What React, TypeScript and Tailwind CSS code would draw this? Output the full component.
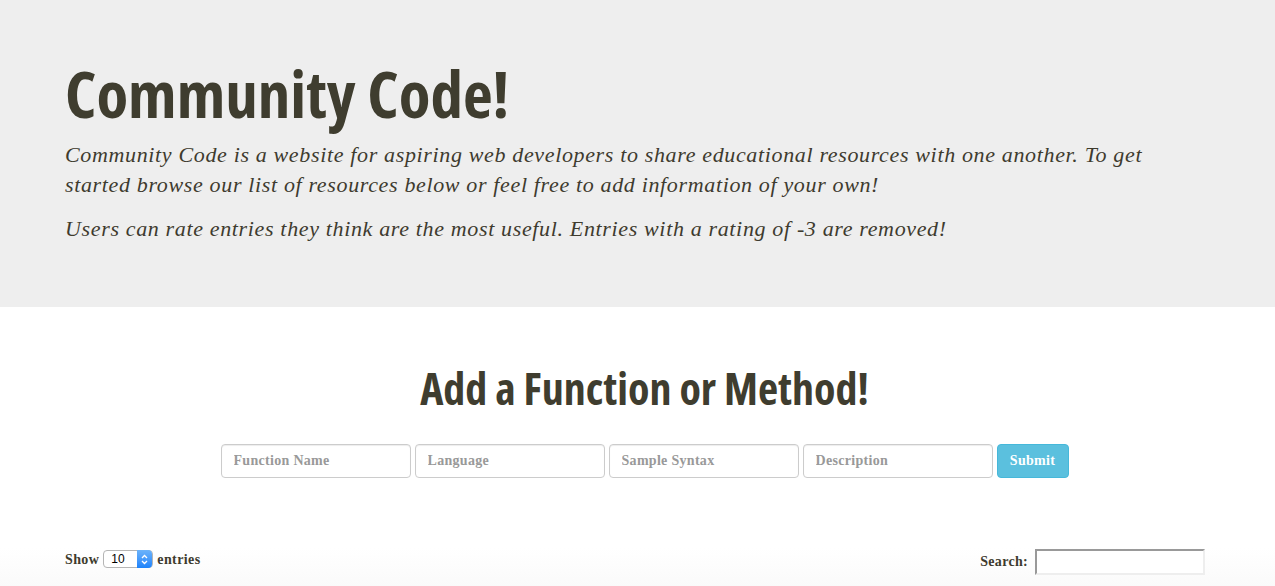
import React from "react";

const fields = ["Function Name", "Language", "Sample Syntax", "Description"];

const condensed = {
  fontFamily: '"Open Sans", "DejaVu Sans Condensed", sans-serif',
  fontStretch: "75%",
};

export default function App() {
  return (
    <div className="min-h-[586px] bg-white font-['Liberation_Serif',serif] text-[#3e3b2e]">
      <header className="bg-[#eeeeee] px-[65px] pt-[58px] pb-[63px]">
        <h1
          className="text-[65px] font-bold leading-[1.1] text-[#3f3d2f]"
          style={condensed}
        >
          Community Code!
        </h1>
        <p className="mt-[10px] max-w-[1142px] text-[22px] italic leading-[30px] tracking-[0.65px]">
          Community Code is a website for aspiring web developers to share educational resources with one another. To get
          started browse our list of resources below or feel free to add information of your own!
        </p>
        <p className="mt-[14px] text-[22px] italic leading-[30px] tracking-[0.65px]">
          Users can rate entries they think are the most useful. Entries with a rating of -3 are removed!
        </p>
      </header>

      <section className="flex flex-col items-center pt-[57px] pl-[14px]">
        <h2 className="text-[44px] font-bold leading-[1.1] text-[#3f3d2f]" style={condensed}>
          Add a Function or Method!
        </h2>
        <form className="mt-[32px] flex gap-[4px]" onSubmit={(e) => e.preventDefault()}>
          {fields.map((f) => (
            <input
              key={f}
              placeholder={f}
              className="h-[34px] w-[190px] rounded-[4px] border border-[#cccccc] bg-white px-[12px] text-[14px] font-bold tracking-[0.3px] text-[#555] shadow-[inset_0_1px_1px_rgba(0,0,0,0.075)] placeholder:text-[#999]"
            />
          ))}
          <button className="h-[34px] w-[72px] rounded-[4px] border border-[#46b8da] bg-[#5bc0de] text-[14px] font-bold tracking-[0.3px] text-white">
            Submit
          </button>
        </form>
      </section>

      <div className="mt-[70px] flex items-start justify-between bg-gradient-to-b from-white to-[#f9f9f9] pl-[65px] pr-[70px] pb-[20px]">
        <label className="mt-[1px] flex items-center gap-[4px] text-[14px] font-bold tracking-[0.4px]">
          Show
          <span className="relative inline-flex h-[18px] w-[50px] items-center rounded-[4px] border border-[#b5b5b5] bg-white">
            <span className="pl-[7px] font-['Liberation_Sans',sans-serif] text-[12px] font-normal tracking-normal text-black">10</span>
            <span className="absolute right-0 top-[-1px] flex h-[18px] w-[15px] items-center justify-center rounded-r-[4px] bg-gradient-to-b from-[#6cb3fa] to-[#1a82fb]">
              <svg width="7" height="11" viewBox="0 0 7 11" fill="none" stroke="white" strokeWidth="1.3">
                <path d="M1 4 L3.5 1.5 L6 4" />
                <path d="M1 7 L3.5 9.5 L6 7" />
              </svg>
            </span>
          </span>
          entries
        </label>
        <label className="mt-[1px] flex items-center gap-[7px] text-[14px] font-bold tracking-[0.3px]">
          Search:
          <input className="h-[26px] w-[170px] border-2 border-t-[#999] border-l-[#999] border-r-[#eee] border-b-[#eee] bg-white" />
        </label>
      </div>
    </div>
  );
}
